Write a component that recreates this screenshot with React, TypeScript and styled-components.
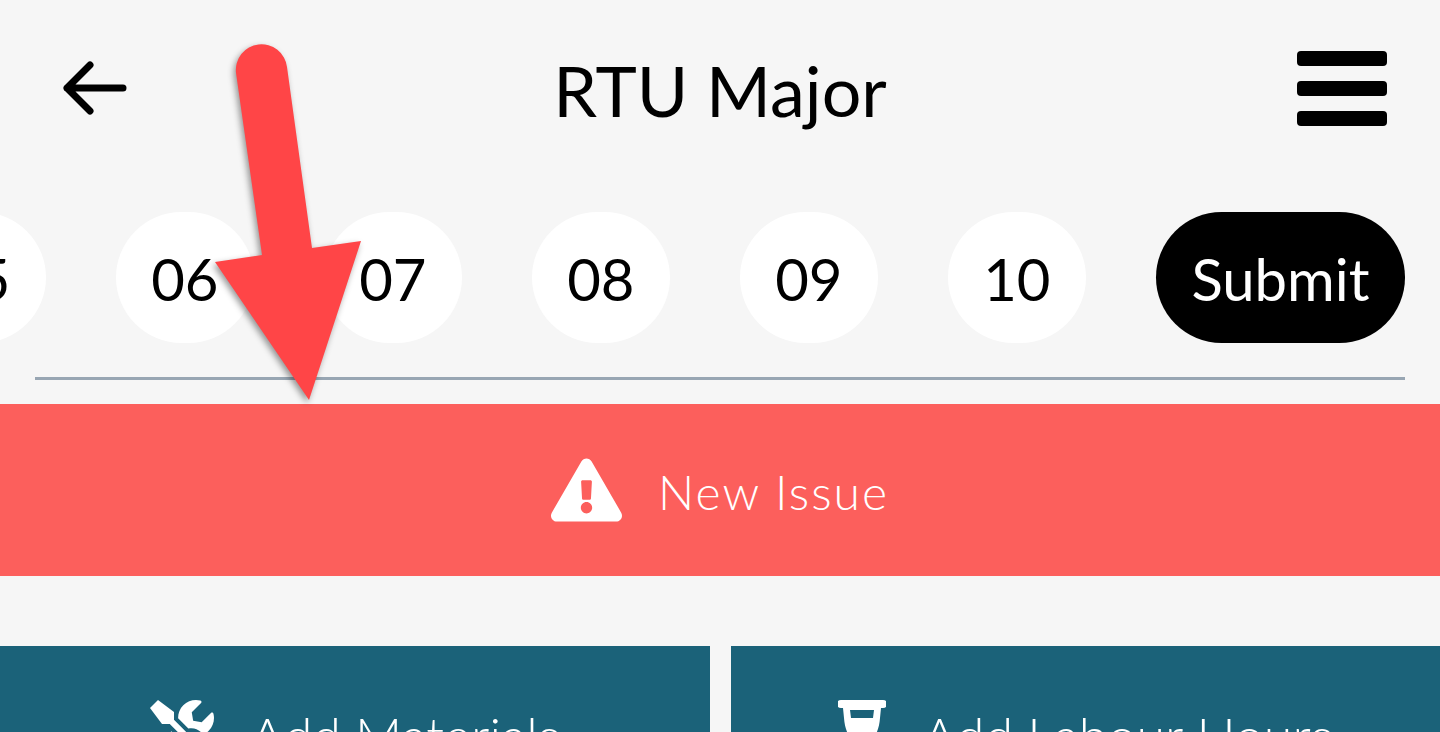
import React from "react";
import styled, { createGlobalStyle } from "styled-components";
import { FaExclamationTriangle, FaTools } from "react-icons/fa";

const GlobalStyle = createGlobalStyle`
  html, body {
    margin: 0;
    padding: 0;
    background: #f6f6f6;
    overflow: hidden;
  }
  body {
    font-family: "Lato", "Noto Sans", sans-serif;
  }
`;

const Page = styled.div`
  position: relative;
  width: 1440px;
  height: 732px;
  overflow: hidden;
  background: #f6f6f6;
`;

const Header = styled.header`
  height: 176px;
  padding: 0 53px 0 63px;
  display: flex;
  align-items: center;
  justify-content: space-between;
  box-sizing: border-box;
`;

const BackButton = styled.div`
  width: 64px;
  height: 54px;
  margin-top: -1px;
  svg {
    display: block;
  }
`;

const Title = styled.h1`
  margin: 4px 0 0 16px;
  font-size: 70px;
  font-weight: 400;
  line-height: 1;
  color: #000;
`;

const Burger = styled.div`
  width: 90px;
  margin-top: 1px;
  display: flex;
  flex-direction: column;
  gap: 15px;
`;

const BurgerBar = styled.span`
  height: 15px;
  border-radius: 4px;
  background: #000;
`;

const Steps = styled.nav`
  height: 131px;
  margin-top: 36px;
  padding-right: 35px;
  display: flex;
  justify-content: flex-end;
  gap: 70px;
`;

const Step = styled.div<{ $active?: boolean }>`
  flex: 0 0 auto;
  min-width: 138px;
  height: 131px;
  box-sizing: border-box;
  padding: ${(p) => (p.$active ? "2px 35.5px 0" : "2px 0 0")};
  display: flex;
  align-items: center;
  justify-content: center;
  border-radius: 66px;
  font-size: 58px;
  background: ${(p) => (p.$active ? "#000" : "#fff")};
  color: ${(p) => (p.$active ? "#fff" : "#000")};
`;

const Divider = styled.hr`
  height: 3px;
  margin: 34px 35px 0;
  border: 0;
  background: #98a6b3;
`;

const IssueBar = styled.div`
  height: 172px;
  margin-top: 24px;
  display: flex;
  align-items: center;
  justify-content: center;
  gap: 36px;
  background: #fc5f5c;
  color: #fff;
  font-size: 48px;
  font-weight: 300;
  letter-spacing: 2px;
`;

const IssueLabel = styled.span`
  margin-top: 3px;
`;

const IssueIcon = styled(FaExclamationTriangle)`
  width: 71px;
  height: 64px;
`;

const Actions = styled.div`
  margin-top: 70px;
  display: grid;
  grid-template-columns: 710px 1fr;
  gap: 21px;
`;

const ActionButton = styled.div`
  height: 172px;
  padding-top: 54px;
  box-sizing: border-box;
  display: flex;
  justify-content: center;
  gap: 36px;
  background: #1b6279;
  color: #fff;
  font-size: 52px;
  font-weight: 300;
  line-height: 70px;
`;

const ToolsIcon = styled(FaTools)`
  width: 64px;
  height: 64px;
  flex: none;
`;

const HelmetIcon = styled.svg`
  width: 48px;
  height: 64px;
  flex: none;
`;

const Callout = styled.svg`
  position: absolute;
  left: 200px;
  top: 30px;
  filter: drop-shadow(-2px 3px 3px rgba(0, 0, 0, 0.4));
`;

const stepLabels = ["05", "06", "07", "08", "09", "10"];

export default function App() {
  return (
    <Page>
      <GlobalStyle />
      <Header>
        <BackButton>
          <svg width="64" height="54" viewBox="0 0 64 54" fill="none" stroke="#000" strokeWidth="7" strokeLinecap="round" strokeLinejoin="round">
            <path d="M60 27H4M27 4 4 27l23 23" />
          </svg>
        </BackButton>
        <Title>RTU Major</Title>
        <Burger>
          <BurgerBar />
          <BurgerBar />
          <BurgerBar />
        </Burger>
      </Header>
      <Steps>
        {stepLabels.map((label) => (
          <Step key={label}>{label}</Step>
        ))}
        <Step $active>Submit</Step>
      </Steps>
      <Divider />
      <IssueBar>
        <IssueIcon />
        <IssueLabel>New Issue</IssueLabel>
      </IssueBar>
      <Actions>
        <ActionButton>
          <ToolsIcon />
          Add Materials
        </ActionButton>
        <ActionButton>
          <HelmetIcon viewBox="0 0 48 64">
            <path
              fill="#fff"
              fillRule="evenodd"
              d="M3 0h42a3 3 0 0 1 0 8h-2l-1 10c-1 14-7 26-18 26S7 32 6 18L5 8H3a3 3 0 0 1 0-8Zm9 10 1 8h22l1-8Z"
            />
          </HelmetIcon>
          Add Labour Hours
        </ActionButton>
      </Actions>
      <Callout width="180" height="390" viewBox="200 30 180 390">
        <path
          fill="#ff4547"
          d="M236 73a25.5 25.5 0 0 1 51-6L312 248l49-7-52 159-94-138 47-7Z"
        />
      </Callout>
    </Page>
  );
}
